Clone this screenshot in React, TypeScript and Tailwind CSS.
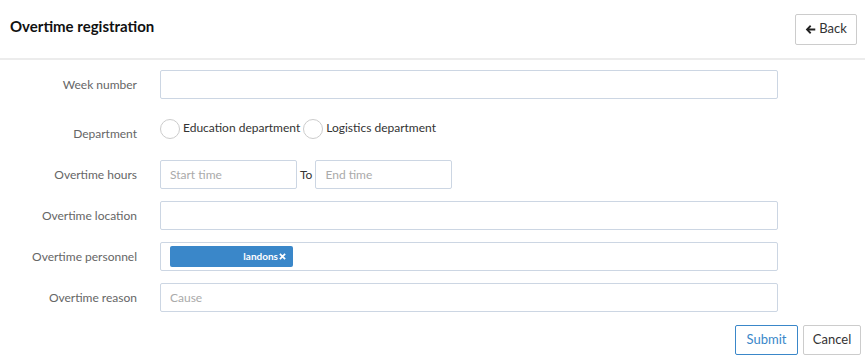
import { useState } from 'react';

const labelCls = 'w-[137px] shrink-0 text-right text-[12px] text-[#666]';
const inputCls =
  'h-[29px] border border-[#ccd6e3] rounded-[2px] px-[9px] text-[12px] text-[#333] placeholder:text-[#aaa] outline-none bg-white';

function Row({ label, children }: { label: string; children: React.ReactNode }) {
  return (
    <div className="flex items-center">
      <div className={labelCls}>{label}</div>
      <div className="ml-[23px] flex items-center">{children}</div>
    </div>
  );
}

export default function App() {
  const [dept, setDept] = useState('');

  return (
    <div className="w-[865px] h-[358px] bg-white overflow-hidden" style={{ fontFamily: 'Lato, "Liberation Sans", sans-serif' }}>
      {/* Header */}
      <header className="h-[60px] flex items-center justify-between pl-[10px] pr-[8px] border-b-2 border-[#ececec]">
        <h1 className="text-[15px] font-bold text-[#111] -mt-[5px]">Overtime registration</h1>
        <button className="h-[31px] w-[62px] flex items-center justify-center gap-[3px] border border-[#ccc] rounded-[2px] text-[13px] text-[#333]">
          <svg width="11" height="11" viewBox="0 0 12 12" fill="#222">
            <path d="M5.5 1.2 L0.8 6 L5.5 10.8 L6.9 9.4 L4.6 7.1 H11.2 V4.9 H4.6 L6.9 2.6 Z" />
          </svg>
          Back
        </button>
      </header>

      {/* Form */}
      <div className="pt-[10px] flex flex-col">
        <Row label="Week number">
          <input className={`${inputCls} w-[618px]`} />
        </Row>

        <div className="flex items-start mt-[20px]">
          <div className={`${labelCls} leading-[18px] pt-[6px]`}>Department</div>
          <div className="ml-[23px] flex items-center">
            {['Education department', 'Logistics department'].map((d, i) => (
              <label key={d} className={`flex items-center cursor-pointer ${i ? 'ml-[3px]' : ''}`} onClick={() => setDept(d)}>
                <span className="w-[20px] h-[20px] rounded-full border border-[#ccc] flex items-center justify-center bg-white">
                  {dept === d && <span className="w-[10px] h-[10px] rounded-full bg-[#3a87c9]" />}
                </span>
                <span className="ml-[3px] text-[12px] text-[#333] -mt-[2px]">{d}</span>
              </label>
            ))}
          </div>
        </div>

        <div className="mt-[17px]">
          <Row label="Overtime hours">
            <input className={`${inputCls} w-[137px]`} placeholder="Start time" />
            <span className="mx-[3px] text-[12px] text-[#333]">To</span>
            <input className={`${inputCls} w-[137px]`} placeholder="End time" />
          </Row>
        </div>

        <div className="mt-[12px]">
          <Row label="Overtime location">
            <input className={`${inputCls} w-[618px]`} />
          </Row>
        </div>

        <div className="mt-[12px]">
          <Row label="Overtime personnel">
            <div className="h-[29px] w-[618px] border border-[#ccd6e3] rounded-[2px] flex items-center pl-[9px]">
              <span className="h-[21px] w-[123px] bg-[#3a87c9] rounded-[2px] flex items-center justify-end pr-[7px] text-[10px] font-bold text-white">
                landons
                <svg width="7" height="7" viewBox="0 0 8 8" className="ml-[1px]">
                  <path d="M1 1 L7 7 M7 1 L1 7" stroke="#fff" strokeWidth="2" />
                </svg>
              </span>
            </div>
          </Row>
        </div>

        <div className="mt-[12px]">
          <Row label="Overtime reason">
            <input className={`${inputCls} w-[618px]`} placeholder="Cause" />
          </Row>
        </div>

        <div className="flex justify-end gap-[5px] pr-[4px] mt-[13px]">
          <button className="h-[30px] w-[63px] border border-[#3a87c9] rounded-[2px] text-[13px] text-[#3a87c9]">Submit</button>
          <button className="h-[30px] w-[58px] border border-[#ccc] rounded-[2px] text-[13px] text-[#333]">Cancel</button>
        </div>
      </div>
    </div>
  );
}
